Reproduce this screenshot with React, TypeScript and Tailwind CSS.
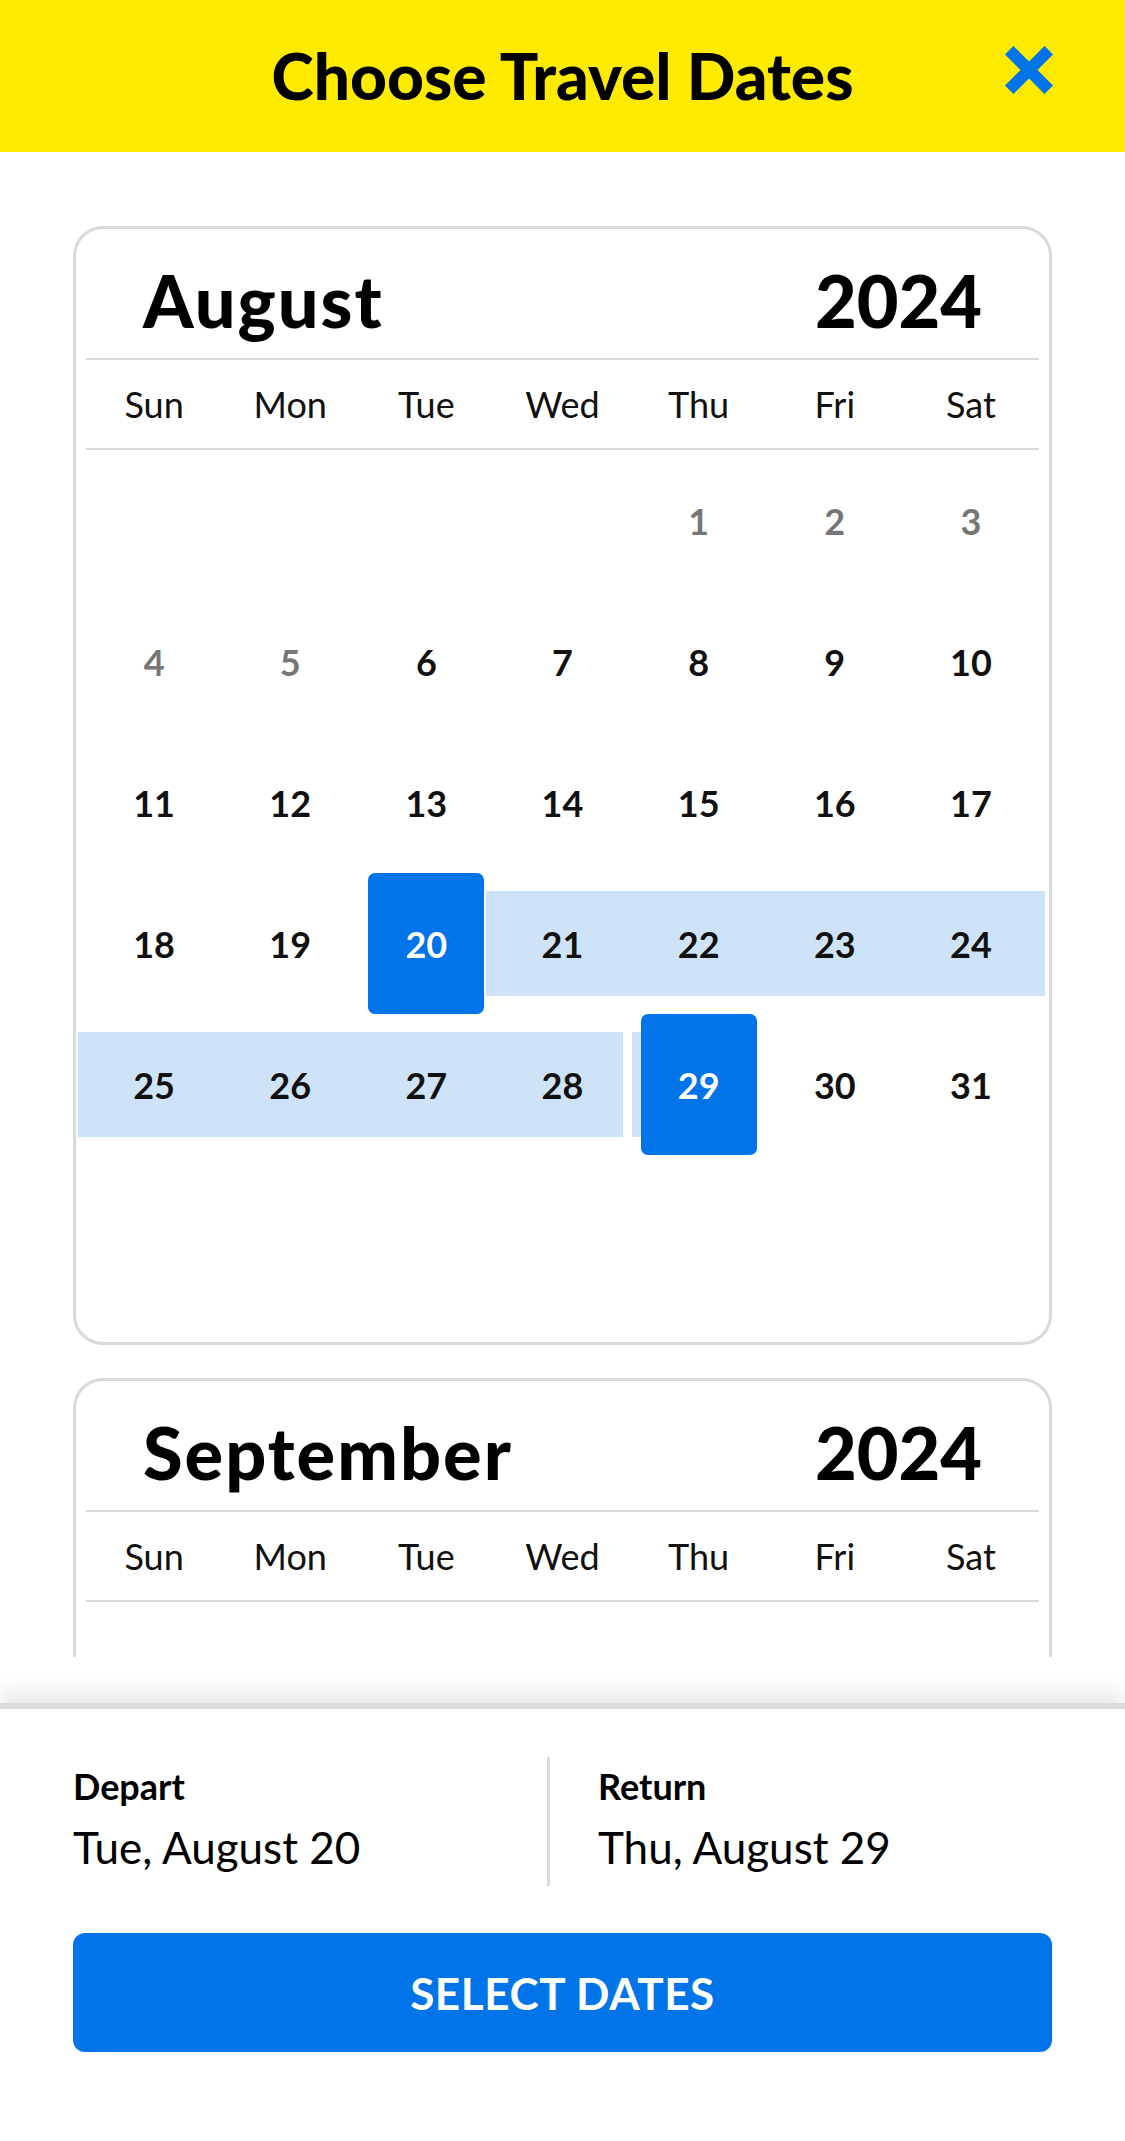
import React from "react";

const WEEKDAYS = ["Sun", "Mon", "Tue", "Wed", "Thu", "Fri", "Sat"];

interface MonthProps {
  name: string;
  year: number;
  firstDow: number;
  days: number;
  disabledBefore?: number;
  start?: number;
  end?: number;
  showDays?: boolean;
}

function buildCells(firstDow: number, days: number) {
  const cells: (number | null)[] = [];
  for (let i = 0; i < firstDow; i++) cells.push(null);
  for (let d = 1; d <= days; d++) cells.push(d);
  while (cells.length < 42) cells.push(null);
  return cells;
}

function DayCell({
  day,
  dow,
  disabledBefore = 0,
  start,
  end,
}: {
  day: number | null;
  dow: number;
  disabledBefore?: number;
  start?: number;
  end?: number;
}) {
  if (day === null) return <div className="h-[141px]" />;

  const isSel = day === start || day === end;
  const inRange = start !== undefined && end !== undefined && day > start && day < end;
  const isEnd = day === end;

  let left = "left-0";
  let right = "right-0";
  if (inRange) {
    if (dow === 0 || day === (start ?? 0) + 1) left = "-left-[8px]";
    if (dow === 6) right = "-right-[6px]";
    if (day === (end ?? 0) - 1) right = "right-[8px]";
  }
  if (isEnd) {
    left = "left-[1px]";
    right = "right-1/2";
  }

  const color = isSel ? "text-white" : day < disabledBefore ? "text-[#767676]" : "text-[#111]";

  return (
    <div className="relative h-[141px] flex items-center justify-center">
      {(inRange || isEnd) && (
        <div className={`absolute inset-y-[18px] bg-[#cfe3f8] ${left} ${right}`} />
      )}
      {isSel && <div className="absolute inset-y-0 left-[10px] right-[10px] rounded-[7px] bg-[#0074e8]" />}
      <span className={`relative text-[36px] font-bold leading-none ${color}`}>{day}</span>
    </div>
  );
}

function MonthCard({ name, year, firstDow, days, disabledBefore, start, end, showDays = true }: MonthProps) {
  const cells = buildCells(firstDow, days);
  return (
    <div className="border-[3px] border-[#d9d9d9] rounded-[30px] bg-white px-[10px] pb-[46px]">
      <div className="h-[129px] flex items-center justify-between px-[57px] pt-[12px]">
        <span className="text-[72px] font-black leading-none tracking-[2px] text-black">{name}</span>
        <span className="text-[72px] font-black leading-none text-black">{year}</span>
      </div>
      <div className="h-[2px] bg-[#d9d9d9]" />
      <div className="grid grid-cols-7 h-[88px] items-center">
        {WEEKDAYS.map((w) => (
          <div key={w} className="text-center text-[36px] leading-none text-[#111]">
            {w}
          </div>
        ))}
      </div>
      <div className="h-[2px] bg-[#d9d9d9]" />
      {showDays ? (
        <div className="grid grid-cols-7">
          {cells.map((d, i) => (
            <DayCell
              key={i}
              day={d}
              dow={i % 7}
              disabledBefore={disabledBefore}
              start={start}
              end={end}
            />
          ))}
        </div>
      ) : (
        <div className="h-[846px]" />
      )}
    </div>
  );
}

export default function App() {
  return (
    <div className="w-[1125px] h-[2141px] flex flex-col bg-white overflow-hidden font-[Lato,sans-serif]">
      {/* header */}
      <div className="h-[152px] flex-shrink-0 bg-[#ffeb00] grid grid-cols-[1fr_auto_1fr] items-center">
        <div />
        <h1 className="text-[64px] font-black leading-none text-black">Choose Travel Dates</h1>
        <button className="justify-self-end mr-[72px] mb-[12px]" title="Close">
          <svg width="48" height="48" viewBox="0 0 48 48" className="block">
            <path
              d="M4.2 4.2 L43.8 43.8 M43.8 4.2 L4.2 43.8"
              stroke="#0074e8"
              strokeWidth="12"
              strokeLinecap="butt"
              fill="none"
            />
          </svg>
        </button>
      </div>

      {/* scrolling months */}
      <div className="h-[1505px] flex-shrink-0 overflow-hidden px-[73px] pt-[74px] flex flex-col gap-[33px]">
        <MonthCard name="August" year={2024} firstDow={4} days={31} disabledBefore={6} start={20} end={29} />
        <MonthCard name="September" year={2024} firstDow={0} days={30} showDays={false} />
      </div>

      {/* footer */}
      <div className="mt-[46px] flex-1 border-t-[6px] border-[#dcdcdc] shadow-[0_-10px_22px_rgba(0,0,0,0.10)] bg-white px-[73px]">
        <div className="mt-[48px] h-[129px] flex">
          <div className="w-[477px] border-r-[3px] border-[#d9d9d9] pt-[11px]">
            <div className="text-[36px] font-bold leading-none text-black">Depart</div>
            <div className="mt-[21px] text-[44px] leading-none text-black">Tue, August 20</div>
          </div>
          <div className="flex-1 pl-[48px] pt-[11px]">
            <div className="text-[36px] font-bold leading-none text-black">Return</div>
            <div className="mt-[21px] text-[44px] leading-none text-black">Thu, August 29</div>
          </div>
        </div>
        <button className="mt-[47px] w-[979px] h-[119px] rounded-[12px] bg-[#0074e8] text-white text-[44px] font-bold leading-none tracking-[0.6px]">
          SELECT DATES
        </button>
      </div>
    </div>
  );
}
